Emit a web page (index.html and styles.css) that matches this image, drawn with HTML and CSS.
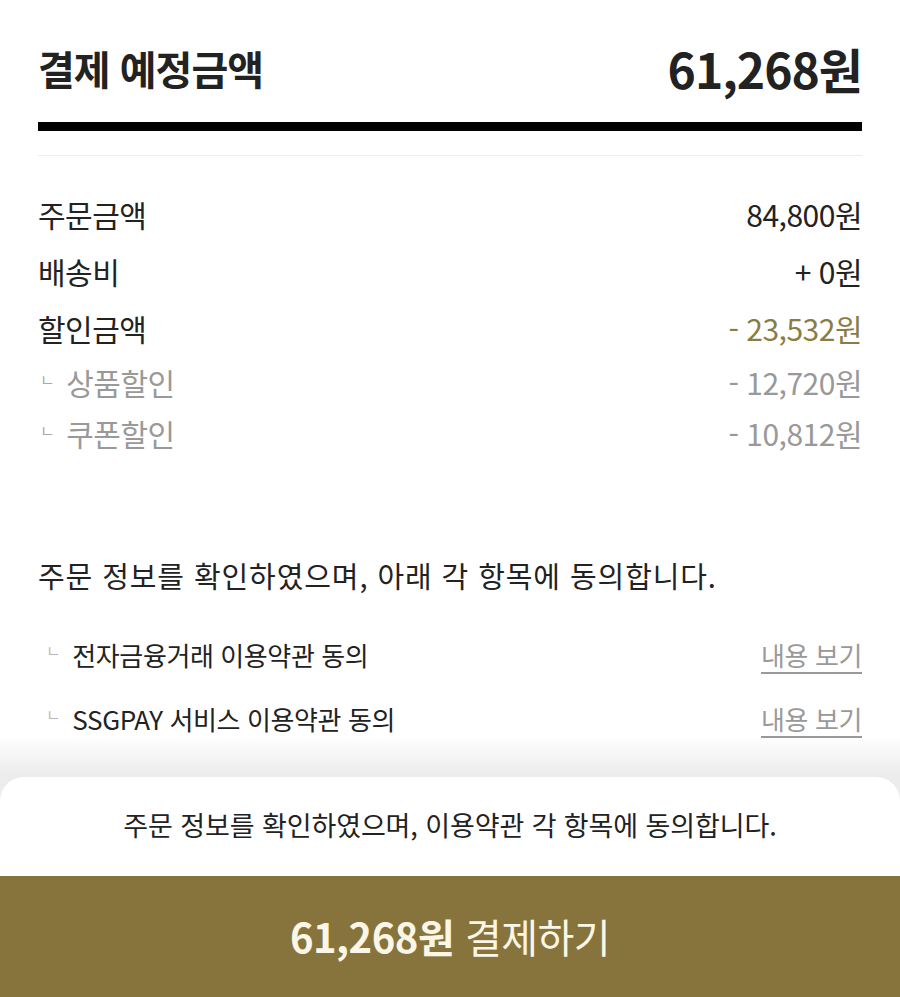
FILE: index.html
```html
<!DOCTYPE html>
<html lang="ko">
<head>
    <meta charset="UTF-8">
    <title>결제 예정금액</title>
    <link rel="stylesheet" href="styles.css">
</head>
<body>
    <div class="page">
        <div class="total">
            <h2 class="total-title">결제 예정금액</h2>
            <span class="total-price">61,268원</span>
        </div>
        <div class="total-bar"></div>
        <div class="thin-line"></div>

        <ul class="price-list">
            <li><span>주문금액</span><span>84,800원</span></li>
            <li><span>배송비</span><span>+ 0원</span></li>
            <li><span>할인금액</span><span class="sale">- 23,532원</span></li>
            <li class="sub"><span><i>ㄴ</i>상품할인</span><span>- 12,720원</span></li>
            <li class="sub"><span><i>ㄴ</i>쿠폰할인</span><span>- 10,812원</span></li>
        </ul>

        <div class="agree">
            <p class="agree-title">주문 정보를 확인하였으며, 아래 각 항목에 동의합니다.</p>
            <div class="agree-item">
                <span><i>ㄴ</i>전자금융거래 이용약관 동의</span>
                <a href="#">내용 보기</a>
            </div>
            <div class="agree-item">
                <span><i>ㄴ</i>SSGPAY 서비스 이용약관 동의</span>
                <a href="#">내용 보기</a>
            </div>
        </div>
    </div>

    <div class="sheet">
        <p class="sheet-text">주문 정보를 확인하였으며, 이용약관 각 항목에 동의합니다.</p>
        <button class="pay-btn"><b>61,268원</b> 결제하기</button>
    </div>
</body>
</html>
```

FILE: styles.css
```css
* {
    margin: 0;
    padding: 0;
    box-sizing: border-box;
}
ul li {
    list-style: none;
}
body {
    width: 900px;
    height: 997px;
    overflow: hidden;
    font-family: "Noto Sans CJK KR", "Noto Sans", sans-serif;
    color: #222;
    background: linear-gradient(to bottom, #fff 0, #fff 735px, #ececec 775px);
}
.page {
    padding: 0 38px;
    height: 777px;
}
.total {
    display: flex;
    justify-content: space-between;
    align-items: center;
    height: 122px;
    padding-top: 14px;
}
.total-title {
    font-size: 40px;
    font-weight: 700;
    letter-spacing: -1px;
}
.total-price {
    font-size: 48px;
    font-weight: 700;
    letter-spacing: -1px;
}
.total-bar {
    height: 9px;
    background: #000;
}
.thin-line {
    height: 1px;
    background: #eee;
    margin-top: 24px;
}
.price-list {
    padding-top: 29px;
}
.price-list li {
    display: flex;
    justify-content: space-between;
    align-items: center;
    height: 57px;
    font-size: 30px;
    letter-spacing: -0.5px;
}
.price-list li.sub {
    color: #999;
    height: 51px;
}
.price-list .sale {
    color: #8a7d44;
}
.price-list i,
.agree-item i {
    font-style: normal;
    font-size: 16px;
    color: #aaa;
    margin: 0 12px 0 2px;
    position: relative;
    top: -9px;
}
.agree {
    padding-top: 96px;
}
.agree-title {
    font-size: 29px;
    letter-spacing: 0.9px;
    color: #222;
    margin-bottom: 26px;
}
.agree-item {
    display: flex;
    justify-content: space-between;
    align-items: center;
    height: 64px;
    font-size: 26px;
    letter-spacing: -0.4px;
    color: #222;
}
.agree-item i {
    color: #bbb;
    margin: 0 12px 0 8px;
}
.agree-item a {
    color: #999;
    text-decoration: underline;
    text-underline-offset: 6px;
    font-size: 26px;
}
.sheet {
    background: #fff;
    border-radius: 24px 24px 0 0;
    height: 220px;
    display: flex;
    flex-direction: column;
}
.sheet-text {
    text-align: center;
    font-size: 27px;
    letter-spacing: -0.1px;
    color: #222;
    height: 99px;
    line-height: 96px;
}
.pay-btn {
    flex: 1;
    border: none;
    background: #86743c;
    color: #fbf6e6;
    font-family: "Noto Sans CJK KR", "Noto Sans", sans-serif;
    font-size: 40px;
    letter-spacing: -0.5px;
    padding-bottom: 2px;
}
.pay-btn b {
    font-weight: 700;
}
```
